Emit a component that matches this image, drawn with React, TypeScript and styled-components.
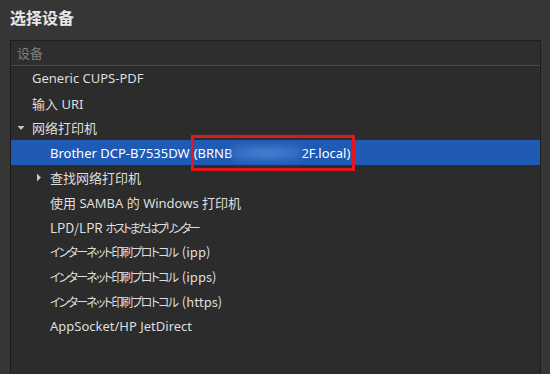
import React from "react";
import styled, { createGlobalStyle } from "styled-components";

const Global = createGlobalStyle`
  html, body { margin: 0; padding: 0; background: #363636; }
  body { font-family: "Noto Sans", "Noto Sans CJK SC", sans-serif; }
`;

const Page = styled.div`
  width: 550px;
  height: 374px;
  background: #363636;
  display: flex;
  flex-direction: column;
  overflow: hidden;
`;

const Title = styled.div`
  font-family: "Noto Sans CJK SC", "Noto Sans", sans-serif;
  font-weight: 700;
  font-size: 16px;
  color: #e6e6e6;
  height: 40px;
  line-height: 34px;
  padding-left: 10px;
  box-sizing: border-box;
`;

const Panel = styled.div`
  flex: 1;
  margin-left: 10px;
  width: 531px;
  background: #2c2c2c;
  border-left: 1px solid #1c1c1c;
  border-right: 1px solid #1c1c1c;
  border-top: 1px solid #1f1f1f;
  box-sizing: border-box;
  display: flex;
  flex-direction: column;
`;

const Header = styled.div`
  height: 25px;
  display: flex;
  align-items: center;
  padding-left: 6px;
  padding-bottom: 2px;
  box-sizing: border-box;
  font-family: "Noto Sans CJK SC", sans-serif;
  font-size: 13px;
  color: #7e7e7e;
  background: #2e2e2e;
  border-bottom: 1px solid #4c4c4c;
  box-shadow: 0 1px 0 #262626;
`;

const List = styled.div`
  display: flex;
  flex-direction: column;
`;

const Row = styled.div<{ $level: number; $selected?: boolean; $jp?: boolean }>`
  height: 24.8px;
  display: flex;
  align-items: center;
  position: relative;
  padding-left: ${(p) => (p.$level === 0 ? 21 : 39)}px;
  font-size: 13px;
  color: ${(p) => (p.$selected ? "#ffffff" : "#dedede")};
  background: ${(p) => (p.$selected ? "#1f5ab4" : "transparent")};
  white-space: nowrap;
  font-family: ${(p) =>
    p.$jp
      ? `"Noto Sans CJK JP", sans-serif`
      : `"Noto Sans", "Noto Sans CJK SC", sans-serif`};
  font-feature-settings: ${(p) => (p.$jp ? `"palt" 1` : "normal")};
`;

const Label = styled.span`
  display: inline-flex;
  align-items: baseline;
  white-space: pre;
`;

const Kana = styled.span<{ $squeeze: number }>`
  font-size: 12px;
  letter-spacing: ${(p) => -p.$squeeze}px;
  margin-right: ${(p) => p.$squeeze}px;
`;

const ArrowBox = styled.span`
  position: absolute;
  width: 8px;
  height: 8px;
  display: flex;
  align-items: center;
  justify-content: center;
`;

const DownArrow = styled(ArrowBox)`
  left: 6px;
  top: 8px;
`;

const RightArrow = styled(ArrowBox)`
  left: 24px;
  top: 8px;
`;

const Marked = styled.span`
  position: relative;
  display: inline-flex;
  align-items: center;
  margin-left: 4px;
  &::after {
    content: "";
    position: absolute;
    left: -3px;
    right: -5px;
    top: -9px;
    bottom: -9px;
    border: 3px solid #e3161d;
  }
`;

const Blur = styled.span`
  display: inline-block;
  width: 69px;
  height: 16px;
  background: radial-gradient(ellipse at center, #4a85d2 0%, #3b74c8 45%, #2a63bb 100%);
  filter: blur(3px);
`;

const Down = () => (
  <DownArrow>
    <svg width="8" height="6" viewBox="0 0 8 6">
      <path d="M0.5 1 L7.5 1 L4 5 Z" fill="#c4c4c4" />
    </svg>
  </DownArrow>
);

const Right = () => (
  <RightArrow>
    <svg width="6" height="9" viewBox="0 0 6 9">
      <path d="M1 0.5 L5 4.5 L1 8.5 Z" fill="#c4c4c4" />
    </svg>
  </RightArrow>
);

const protocols = ["ipp", "ipps", "https"];

export default function App() {
  return (
    <>
      <Global />
      <Page>
        <Title>选择设备</Title>
        <Panel>
          <Header>设备</Header>
          <List>
            <Row $level={0}>Generic CUPS-PDF</Row>
            <Row $level={0}>输入 URI</Row>
            <Row $level={0}>
              <Down />
              网络打印机
            </Row>
            <Row $level={1} $selected>
              Brother DCP-B7535DW
              <Marked>
                (BRNB
                <Blur />
                2F.local)
              </Marked>
            </Row>
            <Row $level={1}>
              <Right />
              查找网络打印机
            </Row>
            <Row $level={1}>使用 SAMBA 的 Windows 打印机</Row>
            <Row $level={1} $jp>
              <Label>
                {"LPD/LPR "}
                <Kana $squeeze={2.5}>ホストまたはプリンター</Kana>
              </Label>
            </Row>
            {protocols.map((p) => (
              <Row key={p} $level={1} $jp>
                <Label>
                  <Kana $squeeze={1.8}>インターネット印刷プロトコル</Kana>
                  {` (${p})`}
                </Label>
              </Row>
            ))}
            <Row $level={1}>AppSocket/HP JetDirect</Row>
          </List>
        </Panel>
      </Page>
    </>
  );
}
